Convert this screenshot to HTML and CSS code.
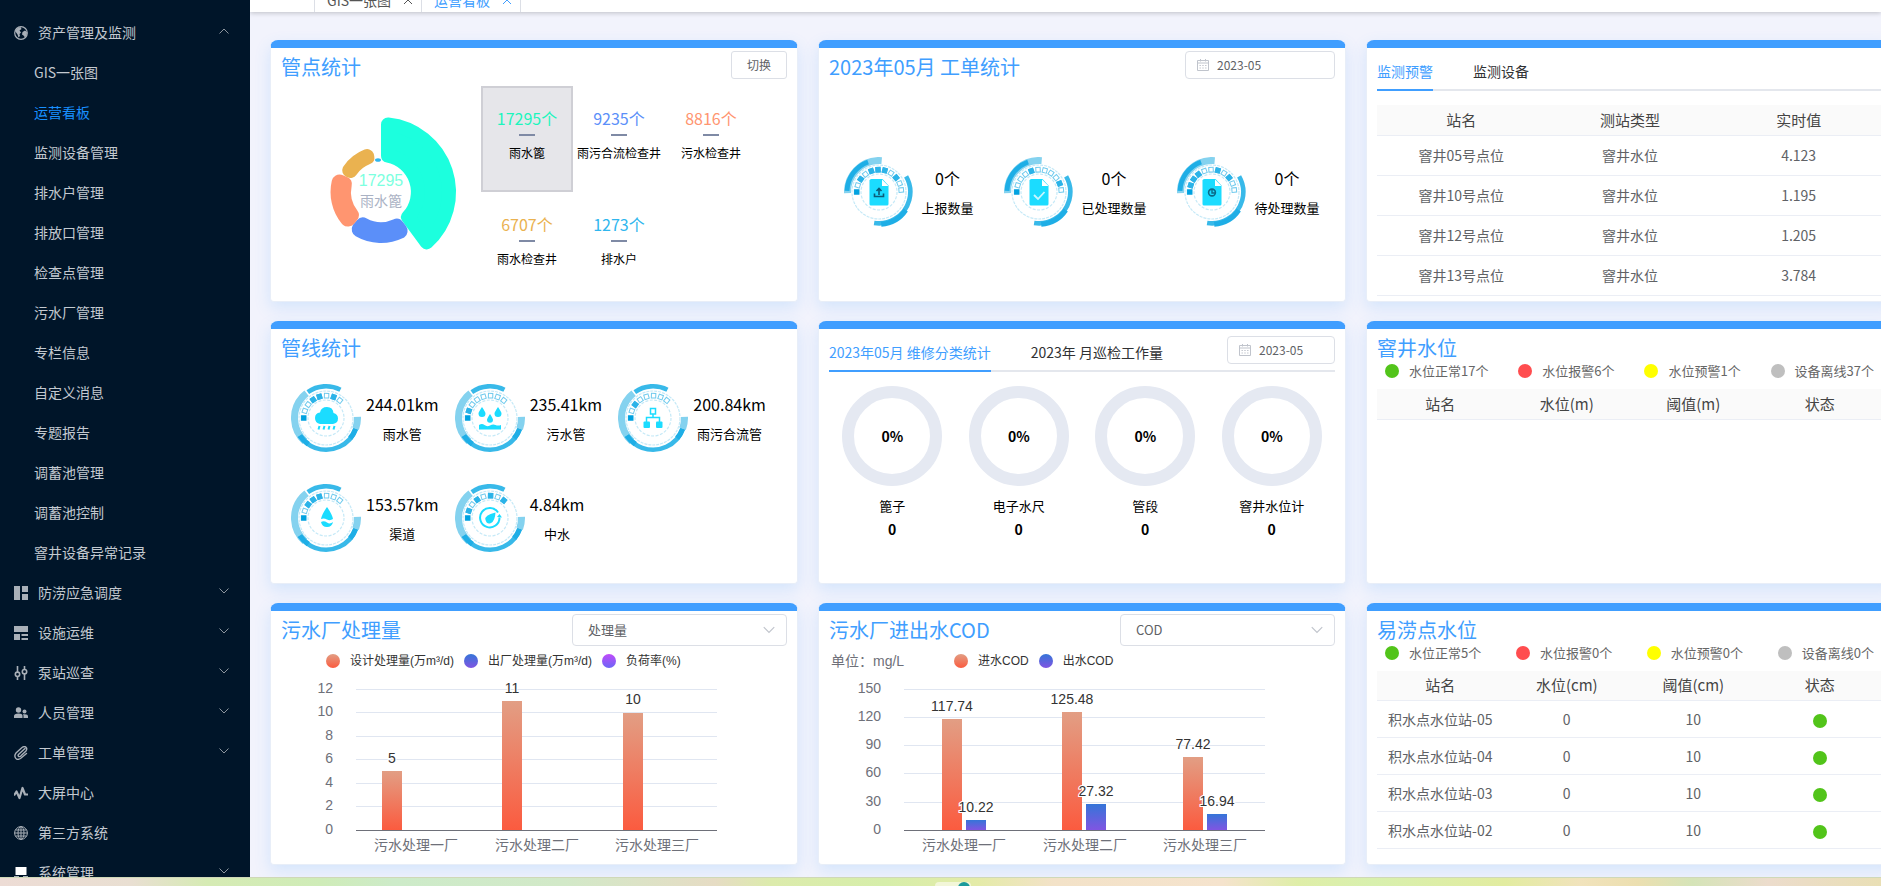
FILE: index.html
```html
<!DOCTYPE html>
<html lang="zh-CN">
<head>
<meta charset="utf-8">
<meta name="viewport" content="width=device-width, initial-scale=1">
<title>运营看板</title>
<link rel="stylesheet" href="styles.css">
</head>
<body>
<svg class="defs" aria-hidden="true">
  <defs>
    <linearGradient id="g-orange" x1="0" y1="0" x2="0" y2="1"><stop offset="0" stop-color="#e29e84"/><stop offset="1" stop-color="#fb5b3f"/></linearGradient>
    <linearGradient id="g-blue" x1="0" y1="0" x2="0" y2="1"><stop offset="0" stop-color="#3575d8"/><stop offset="1" stop-color="#8055e2"/></linearGradient>
    <rect id="box" x="-2.200" y="-24.600" width="4.400" height="4.600"/>
  </defs>
  <symbol id="i-up" viewBox="0 0 12 12"><path d="M1.500 8.500 6 4l4.500 4.500" fill="none" stroke="currentColor"/></symbol>
  <symbol id="i-down" viewBox="0 0 12 12"><path d="M1.500 3.500 6 8l4.500-4.500" fill="none" stroke="currentColor"/></symbol>
  <symbol id="i-close" viewBox="0 0 10 10"><path d="M1 1l8 8M9 1 1 9" fill="none" stroke="currentColor"/></symbol>
  <symbol id="i-cal" viewBox="0 0 12 12"><path d="M.5 1.500h11v10H.5zM.5 4h11M3.500 0v2.500M8.500 0v2.500" fill="none" stroke="currentColor"/><path d="M2.500 6.500h7M2.500 9h7" fill="none" stroke="currentColor" stroke-dasharray="1.400 1.400"/></symbol>
  <symbol id="ring-a" viewBox="-35 -35 70 70">
    <g fill="none">
      <circle r="31.500" stroke="#84d2ef" stroke-width="7" pathLength="360" stroke-dasharray="97 360" transform="rotate(178)"/>
      <circle r="32" stroke="#1eaee6" stroke-width="4.800" pathLength="360" stroke-dasharray="68 360" transform="rotate(182)"/>
      <circle r="31.300" stroke="#38b9e9" stroke-width="4.600" pathLength="360" stroke-dasharray="129 360" transform="rotate(-30)"/>
      <circle r="32.300" stroke="#1eaee6" stroke-width="5" pathLength="360" stroke-dasharray="52 360" transform="rotate(34)"/>
      <circle r="27" stroke="#c5e9f7" stroke-width="1.200" stroke-dasharray="3 1"/>
      <circle r="18" stroke="#c5e9f7" stroke-width="1.200" stroke-dasharray="3 1.500"/>
    </g>
    <g fill="#fff" stroke="#6fcaed">
      <use href="#box" transform="rotate(-72.500)"/><use href="#box" transform="rotate(-55)"/><use href="#box" transform="rotate(-37.500)"/><use href="#box" transform="rotate(-20)"/><use href="#box" transform="rotate(-2.500)"/><use href="#box" transform="rotate(15)"/><use href="#box" transform="rotate(32.500)"/><use href="#box" transform="rotate(50)"/><use href="#box" transform="rotate(67.500)"/><use href="#box" transform="rotate(85)"/>
    </g>
    <use href="#box" transform="rotate(-90)" fill="#00a2e0" stroke="#00a2e0"/>
  </symbol>
  <symbol id="ring-b" viewBox="-35 -35 70 70">
    <g fill="none">
      <circle r="31.700" stroke="#38b9e9" stroke-width="4.600" pathLength="360" stroke-dasharray="62 360" transform="rotate(-125)"/>
      <circle r="31.500" stroke="#84d2ef" stroke-width="7" pathLength="360" stroke-dasharray="100 360" transform="rotate(132)"/>
      <circle r="31.500" stroke="#84d2ef" stroke-width="7" pathLength="360" stroke-dasharray="22 360" transform="rotate(-2)"/>
      <circle r="31.700" stroke="#38b9e9" stroke-width="4.600" pathLength="360" stroke-dasharray="126 360" transform="rotate(20)"/>
      <circle r="31.500" stroke="#1eaee6" stroke-width="5.200" pathLength="360" stroke-dasharray="20 360" transform="rotate(20)"/>
      <circle r="31.500" stroke="#1eaee6" stroke-width="5.200" pathLength="360" stroke-dasharray="22 360" transform="rotate(124)"/>
      <circle r="27" stroke="#c5e9f7" stroke-width="1.200" stroke-dasharray="3 1"/>
      <circle r="18" stroke="#c5e9f7" stroke-width="1.200" stroke-dasharray="3 1.500"/>
    </g>
    <g fill="#fff" stroke="#6fcaed">
      <use href="#box" transform="rotate(-71.500)"/><use href="#box" transform="rotate(-53)"/><use href="#box" transform="rotate(-35)"/><use href="#box" transform="rotate(-17)"/><use href="#box" transform="rotate(1.500)"/><use href="#box" transform="rotate(20)"/><use href="#box" transform="rotate(38)"/>
    </g>
    <use href="#box" transform="rotate(-90)" fill="#00a2e0" stroke="#00a2e0"/>
  </symbol>
  <symbol id="file" viewBox="-35 -35 70 70"><path d="M-7.500-13H3.500L9.500-6.500V12Q9.500 13.500 8 13.500H-8Q-9.500 13.500-9.500 12V-11.500Q-9.500-13-7.500-13Z" fill="#1bdcff"/><path d="M3-12.500V-6H9.500Z" fill="#fff"/></symbol>
</svg>

<div class="app">
  <nav class="sidebar" aria-label="主菜单">
    <button class="menu" aria-expanded="true">
      <svg class="mi" viewBox="0 0 14 14"><circle cx="7" cy="7" r="6.300" fill="none" stroke="currentColor" stroke-width="1.200"/><path d="M1 5Q3 1.500 6.500 1L7.500 3 5.500 4.500 7 6.500 5.500 8 6 10 4.500 11.500 3.500 8.500ZM8.500 6 11 4.500 13 6Q13.500 9 11 11.500L9.500 9.500 8 8.500Z" fill="currentColor"/></svg>
      <span>资产管理及监测</span><svg class="arr"><use href="#i-up"/></svg></button>
    <a class="sub" href="#">GIS一张图</a>
    <a class="sub on" href="#" aria-current="page">运营看板</a>
    <a class="sub" href="#">监测设备管理</a>
    <a class="sub" href="#">排水户管理</a>
    <a class="sub" href="#">排放口管理</a>
    <a class="sub" href="#">检查点管理</a>
    <a class="sub" href="#">污水厂管理</a>
    <a class="sub" href="#">专栏信息</a>
    <a class="sub" href="#">自定义消息</a>
    <a class="sub" href="#">专题报告</a>
    <a class="sub" href="#">调蓄池管理</a>
    <a class="sub" href="#">调蓄池控制</a>
    <a class="sub" href="#">窨井设备异常记录</a>
    <button class="menu"><svg class="mi" viewBox="0 0 14 14"><path d="M0 0h6v14H0zM8 0h6v6H8zM8 8h6v6H8z" fill="currentColor"/></svg><span>防涝应急调度</span><svg class="arr"><use href="#i-down"/></svg></button>
    <button class="menu"><svg class="mi" viewBox="0 0 14 14"><path d="M0 0h14v6H0zM0 8h6v6H0zM7.500 8H14v2H7.500zM7.500 12H14v2H7.500z" fill="currentColor"/></svg><span>设施运维</span><svg class="arr"><use href="#i-down"/></svg></button>
    <button class="menu"><svg class="mi" viewBox="0 0 14 14"><g fill="none" stroke="currentColor" stroke-width="1.600"><path d="M3.500 0v6M3.500 10.500V14M10.500 0v3.500M10.500 8v6"/><circle cx="3.500" cy="8.300" r="2.200"/><circle cx="10.500" cy="5.700" r="2.200"/></g></svg><span>泵站巡查</span><svg class="arr"><use href="#i-down"/></svg></button>
    <button class="menu"><svg class="mi" viewBox="0 0 14 14"><g fill="currentColor"><circle cx="4.500" cy="4" r="2.700"/><path d="M0 12V10Q0 7.500 4.500 7.500T8.500 10V12Z"/><circle cx="10.500" cy="5.500" r="2"/><path d="M9.500 12V10Q9.500 9 8.800 8.300 14 7.500 14 10.500V12Z"/></g></svg><span>人员管理</span><svg class="arr"><use href="#i-down"/></svg></button>
    <button class="menu"><svg class="mi" viewBox="0 0 14 14"><path d="M11 2.500 4.500 8.500Q3.500 10 4.800 10.500T7 9.800L12 5Q13.500 2.500 12 1.200T8 1.500L2 7Q0 9.500 1.500 12T6.500 12.500L12.500 7.500" fill="none" stroke="currentColor" stroke-width="1.400" stroke-linecap="round"/></svg><span>工单管理</span><svg class="arr"><use href="#i-down"/></svg></button>
    <button class="menu"><svg class="mi" viewBox="0 0 14 14"><path d="M0 9.500 2.500 5.500 5.500 12 8.500 2 11 8.500H14" fill="none" stroke="currentColor" stroke-width="2.200" stroke-linejoin="round"/></svg><span>大屏中心</span></button>
    <button class="menu"><svg class="mi" viewBox="0 0 14 14"><g fill="none" stroke="currentColor"><circle cx="7" cy="7" r="6.400"/><ellipse cx="7" cy="7" rx="3" ry="6.400"/><path d="M.6 7h12.800M1.500 4h11M1.500 10h11M7 .6v12.800"/></g></svg><span>第三方系统</span></button>
    <button class="menu"><svg class="mi" viewBox="0 0 14 14"><path d="M1.500 1h11v8h-11z" fill="#fff"/><path d="M0 10h5v2H0zM9 10h5v2H9z" fill="currentColor"/></svg><span>系统管理</span><svg class="arr"><use href="#i-down"/></svg></button>
  </nav>

  <main class="main">
    <div class="pages">
      <a class="page" href="#">GIS一张图<svg class="x"><use href="#i-close"/></svg></a>
      <a class="page on" href="#">运营看板<svg class="x"><use href="#i-close"/></svg></a>
    </div>

    <div class="board">
      <section class="card">
        <header class="head"><h2>管点统计</h2><button class="btn">切换</button></header>
        <div class="points">
          <svg class="rose" viewBox="-100 -106 200 212" role="img" aria-label="管点数量占比">
            <g stroke-linejoin="round">
              <path d="M7-67.600A68 68 0 0 1 45.700 50.400L27.100 25.100A37 37 0 0 0 7-36.300Z" fill="#1cffde" stroke="#1cffde" stroke-width="14"/>
              <path d="M18.600 38.800A43 43 0 0 1-21.300 37.300L-18 33.500A38 38 0 0 0 15.500 34.700Z" fill="#5b8ff9" stroke="#5b8ff9" stroke-width="16"/>
              <path d="M-33.100 26.600A42.500 42.500 0 0 1-41.400-9.500L-37.200-7.600A38 38 0 0 0-30.200 23.100Z" fill="#ff9570" stroke="#ff9570" stroke-width="16"/>
              <path d="M-31.800-21.600A38.500 38.500 0 0 1-13.900-35.900L-13.600-34.400A37 37 0 0 0-30.500-21Z" fill="#eab250" stroke="#eab250" stroke-width="14"/>
            </g>
            <ellipse cx="-3" cy="-32" rx="3" ry="1.800" fill="#2fb6ee"/>
            <text class="rose-n" x="0" y="-6">17295</text>
            <text class="rose-t" x="0" y="14">雨水篦</text>
          </svg>
          <div class="cells">
            <div class="cell sel"><b class="c1">17295个</b><i></i><span>雨水篦</span></div>
            <div class="cell"><b class="c2">9235个</b><i></i><span>雨污合流检查井</span></div>
            <div class="cell"><b class="c3">8816个</b><i></i><span>污水检查井</span></div>
            <div class="cell"><b class="c4">6707个</b><i></i><span>雨水检查井</span></div>
            <div class="cell"><b class="c5">1273个</b><i></i><span>排水户</span></div>
          </div>
        </div>
      </section>

      <section class="card">
        <header class="head"><h2>2023年05月 工单统计</h2>
          <label class="date wide"><svg><use href="#i-cal"/></svg><input type="text" value="2023-05" aria-label="月份"></label></header>
        <div class="orders">
          <div class="stat gap"><svg class="ring" viewBox="-35 -35 70 70"><use href="#ring-a" x="-35" y="-35" width="70" height="70"/>
            <g fill="#2bb3e8" stroke="#2bb3e8"><use href="#box" transform="rotate(-55)"/><use href="#box" transform="rotate(-20)"/><use href="#box" transform="rotate(-2.500)"/><use href="#box" transform="rotate(15)"/><use href="#box" transform="rotate(50)"/></g>
            <use href="#file" x="-35" y="-35" width="70" height="70"/><path d="M0 3V-3M-2.500-1 0-3.500 2.500-1M-4.500 1.500V4.500H4.500V1.500" fill="none" stroke="#0b5c78" stroke-width="1.600"/></svg>
            <div><b>0个</b><span>上报数量</span></div></div>
          <div class="stat gap"><svg class="ring" viewBox="-35 -35 70 70"><use href="#ring-a" x="-35" y="-35" width="70" height="70"/>
            <g fill="#2bb3e8" stroke="#2bb3e8"><use href="#box" transform="rotate(-20)"/><use href="#box" transform="rotate(67.500)"/></g>
            <use href="#file" x="-35" y="-35" width="70" height="70"/><path d="M-5 3-1 7 5.500 0" fill="none" stroke="#c9f6ff" stroke-width="1.800"/></svg>
            <div><b>0个</b><span>已处理数量</span></div></div>
          <div class="stat gap"><svg class="ring" viewBox="-35 -35 70 70"><use href="#ring-a" x="-35" y="-35" width="70" height="70"/>
            <g fill="#2bb3e8" stroke="#2bb3e8"><use href="#box" transform="rotate(-72.500)"/><use href="#box" transform="rotate(-55)"/><use href="#box" transform="rotate(-37.500)"/><use href="#box" transform="rotate(15)"/><use href="#box" transform="rotate(50)"/></g>
            <use href="#file" x="-35" y="-35" width="70" height="70"/><circle r="3.400" cy=".5" fill="none" stroke="#0b6a88" stroke-width="1.600"/><path d="M0-2V1H3" fill="none" stroke="#0b6a88" stroke-width="1.400"/></svg>
            <div><b>0个</b><span>待处理数量</span></div></div>
        </div>
      </section>

      <section class="card">
        <div class="tabs" role="tablist"><button class="tab on" role="tab" aria-selected="true">监测预警</button><button class="tab" role="tab">监测设备</button></div>
        <table class="grid tall">
          <thead><tr><th>站名</th><th>测站类型</th><th>实时值</th></tr></thead>
          <tbody>
            <tr><td>窨井05号点位</td><td>窨井水位</td><td>4.123</td></tr>
            <tr><td>窨井10号点位</td><td>窨井水位</td><td>1.195</td></tr>
            <tr><td>窨井12号点位</td><td>窨井水位</td><td>1.205</td></tr>
            <tr><td>窨井13号点位</td><td>窨井水位</td><td>3.784</td></tr>
          </tbody>
        </table>
      </section>

      <section class="card">
        <header class="head"><h2>管线统计</h2></header>
        <div class="pipes">
          <div class="stat"><svg class="ring" viewBox="-35 -35 70 70"><use href="#ring-b" x="-35" y="-35" width="70" height="70"/>
            <g fill="#2bb3e8" stroke="#2bb3e8"><use href="#box" transform="rotate(-35)"/><use href="#box" transform="rotate(-17)"/><use href="#box" transform="rotate(20)"/></g>
            <path d="M-6 6Q-11 5-11 0T-6-5.500Q-5-11 1-11T7.500-5Q12-4 12 .5T7 6Z" fill="#1bdcff"/><path d="M-6.500 8-7.500 11.500M-1.500 8-2.500 11.500M3.500 8 2.500 11.500M8.500 8 7.500 11.500" stroke="#1bdcff" stroke-width="2"/></svg>
            <div><b>244.01km</b><span>雨水管</span></div></div>
          <div class="stat"><svg class="ring" viewBox="-35 -35 70 70"><use href="#ring-b" x="-35" y="-35" width="70" height="70"/>
            <g fill="#2bb3e8" stroke="#2bb3e8"><use href="#box" transform="rotate(-71.500)"/></g>
            <path d="M-8-11Q-4.500-6-4.500-4.500A3.500 3.500 0 0 1-11.500-4.500Q-11.500-6-8-11ZM8-11Q11.500-6 11.500-4.500A3.500 3.500 0 0 1 4.500-4.500Q4.500-6 8-11ZM0-4Q3 .5 3 1.800A3 3 0 0 1-3 1.800Q-3 .5 0-4ZM-11 7Q-8 5-5.500 7T0 7.500 5.500 7 11 7V11.500H-11Z" fill="#1bdcff"/></svg>
            <div><b>235.41km</b><span>污水管</span></div></div>
          <div class="stat"><svg class="ring" viewBox="-35 -35 70 70"><use href="#ring-b" x="-35" y="-35" width="70" height="70"/>
            <g fill="#2bb3e8" stroke="#2bb3e8"><use href="#box" transform="rotate(-53)"/></g>
            <path d="M-2.500-9.500h5v5.500h-5zM0-4V0M-6.500 4V-.5H6.500V4" fill="none" stroke="#1bdcff" stroke-width="1.500"/><rect x="-9.500" y="3.500" width="6.500" height="6.500" rx="1" fill="#1bdcff"/><rect x="3" y="3.500" width="6.500" height="6.500" rx="1" fill="#1bdcff"/></svg>
            <div><b>200.84km</b><span>雨污合流管</span></div></div>
          <div class="stat"><svg class="ring" viewBox="-35 -35 70 70"><use href="#ring-b" x="-35" y="-35" width="70" height="70"/>
            <g fill="#2bb3e8" stroke="#2bb3e8"><use href="#box" transform="rotate(-53)"/><use href="#box" transform="rotate(-35)"/><use href="#box" transform="rotate(-17)"/></g>
            <path d="M1-11Q6-4 7 1Q4 3 1 1.500T-5 1Q-4-4 1-11ZM-5 4Q-2 2.500 1 4.500T7 4Q6 9 1 9T-5 4Z" fill="#1bdcff"/></svg>
            <div><b>153.57km</b><span>渠道</span></div></div>
          <div class="stat"><svg class="ring" viewBox="-35 -35 70 70"><use href="#ring-b" x="-35" y="-35" width="70" height="70"/>
            <g fill="#2bb3e8" stroke="#2bb3e8"><use href="#box" transform="rotate(-71.500)"/><use href="#box" transform="rotate(-35)"/><use href="#box" transform="rotate(1.500)"/><use href="#box" transform="rotate(38)"/></g>
            <path d="M8-5.500A9.700 9.700 0 1 0 9.500-.5" fill="none" stroke="#1bdcff" stroke-width="2"/><path d="M7-1 9.500-4 12-.5ZM5.500-5.500Q5 3 1 5T-4.500 2 5.500-5.500Z" fill="#1bdcff"/></svg>
            <div><b>4.84km</b><span>中水</span></div></div>
        </div>
      </section>

      <section class="card">
        <div class="tabs" role="tablist"><button class="tab on" role="tab" aria-selected="true">2023年05月 维修分类统计</button><button class="tab" role="tab">2023年 月巡检工作量</button>
          <label class="date"><svg><use href="#i-cal"/></svg><input type="text" value="2023-05" aria-label="统计月份"></label></div>
        <div class="gauges">
          <div class="gauge"><div class="circle">0%</div><span>篦子</span><b>0</b></div>
          <div class="gauge"><div class="circle">0%</div><span>电子水尺</span><b>0</b></div>
          <div class="gauge"><div class="circle">0%</div><span>管段</span><b>0</b></div>
          <div class="gauge"><div class="circle">0%</div><span>窨井水位计</span><b>0</b></div>
        </div>
      </section>

      <section class="card">
        <header class="head"><h2>窨井水位</h2></header>
        <ul class="levels"><li><i class="dot ok"></i>水位正常17个</li><li><i class="dot alarm"></i>水位报警6个</li><li><i class="dot warn"></i>水位预警1个</li><li><i class="dot off"></i>设备离线37个</li></ul>
        <table class="grid"><thead><tr><th>站名</th><th>水位(m)</th><th>阈值(m)</th><th>状态</th></tr></thead></table>
      </section>

      <section class="card">
        <header class="head"><h2>污水厂处理量</h2>
          <div class="select"><select aria-label="指标"><option>处理量</option></select><svg><use href="#i-down"/></svg></div></header>
        <div class="legend first"><span><i class="dot s1"></i>设计处理量(万m³/d)</span><span><i class="dot s2"></i>出厂处理量(万m³/d)</span><span><i class="dot s3"></i>负荷率(%)</span></div>
        <svg class="chart" viewBox="0 0 506 180" role="img" aria-label="污水厂处理量">
          <path class="lines" d="M75 13.500H436M75 36.500H436M75 60.500H436M75 83.500H436M75 107.500H436M75 130.500H436"/>
          <g class="ax end"><text x="52" y="17">12</text><text x="52" y="40">10</text><text x="52" y="64">8</text><text x="52" y="87">6</text><text x="52" y="111">4</text><text x="52" y="134">2</text><text x="52" y="158">0</text></g>
          <g fill="url(#g-orange)"><rect x="101" y="95" width="20" height="59"/><rect x="221" y="25" width="20" height="129"/><rect x="342" y="37" width="20" height="117"/></g>
          <path class="base" d="M75 154.500H436"/>
          <g class="val"><text x="111" y="87">5</text><text x="231" y="17">11</text><text x="352" y="28">10</text></g>
          <g class="ax"><text x="135" y="174">污水处理一厂</text><text x="256" y="174">污水处理二厂</text><text x="376" y="174">污水处理三厂</text></g>
        </svg>
      </section>

      <section class="card">
        <header class="head"><h2>污水厂进出水COD</h2>
          <div class="select"><select aria-label="水质指标"><option>COD</option></select><svg><use href="#i-down"/></svg></div></header>
        <div class="legend"><em>单位：mg/L</em><span><i class="dot s1"></i>进水COD</span><span><i class="dot s2"></i>出水COD</span></div>
        <svg class="chart" viewBox="0 0 506 180" role="img" aria-label="污水厂进出水COD">
          <path class="lines" d="M75 13.500H436M75 41.500H436M75 69.500H436M75 97.500H436M75 126.500H436"/>
          <g class="ax end"><text x="52" y="17">150</text><text x="52" y="45">120</text><text x="52" y="73">90</text><text x="52" y="101">60</text><text x="52" y="130">30</text><text x="52" y="158">0</text></g>
          <g fill="url(#g-orange)"><rect x="113" y="43" width="20" height="111"/><rect x="233" y="36" width="20" height="118"/><rect x="354" y="81" width="20" height="73"/></g>
          <g fill="url(#g-blue)"><rect x="137" y="144" width="20" height="10"/><rect x="257" y="128" width="20" height="26"/><rect x="378" y="138" width="20" height="16"/></g>
          <path class="base" d="M75 154.500H436"/>
          <g class="val"><text x="123" y="35">117.74</text><text x="243" y="28">125.48</text><text x="364" y="73">77.42</text><text x="147" y="136">10.22</text><text x="267" y="120">27.32</text><text x="388" y="130">16.94</text></g>
          <g class="ax"><text x="135" y="174">污水处理一厂</text><text x="256" y="174">污水处理二厂</text><text x="376" y="174">污水处理三厂</text></g>
        </svg>
      </section>

      <section class="card">
        <header class="head"><h2>易涝点水位</h2></header>
        <ul class="levels"><li><i class="dot ok"></i>水位正常5个</li><li><i class="dot alarm"></i>水位报警0个</li><li><i class="dot warn"></i>水位预警0个</li><li><i class="dot off"></i>设备离线0个</li></ul>
        <table class="grid">
          <thead><tr><th>站名</th><th>水位(cm)</th><th>阈值(cm)</th><th>状态</th></tr></thead>
          <tbody>
            <tr><td>积水点水位站-05</td><td>0</td><td>10</td><td><i class="dot ok"></i></td></tr>
            <tr><td>积水点水位站-04</td><td>0</td><td>10</td><td><i class="dot ok"></i></td></tr>
            <tr><td>积水点水位站-03</td><td>0</td><td>10</td><td><i class="dot ok"></i></td></tr>
            <tr><td>积水点水位站-02</td><td>0</td><td>10</td><td><i class="dot ok"></i></td></tr>
          </tbody>
        </table>
      </section>
    </div>
  </main>
</div>
<footer class="taskbar"><div class="task"><i></i></div></footer>
</body>
</html>
```

FILE: styles.css
```css
* { box-sizing: border-box; }
html, body { height: 100%; }
body {
  margin: 0;
  display: flex;
  flex-direction: column;
  overflow: hidden;
  font: 14px/20px "Noto Sans CJK SC", "Noto Sans", sans-serif;
  color: #000;
}
button, input, select { font: inherit; color: inherit; margin: 0; }
a { color: inherit; text-decoration: none; }
h2, ul { margin: 0; padding: 0; font-weight: 400; }
b, i, em { font-weight: 400; font-style: normal; }
.defs { position: absolute; width: 0; height: 0; }

.app { flex: 1; min-height: 0; display: flex; overflow: hidden; }

/* sidebar */
.sidebar {
  flex: 0 0 250px;
  padding-top: 13px;
  display: flex;
  flex-direction: column;
  overflow: hidden;
  background: #001529;
  color: #c3c9d0;
}
.menu, .sub { flex: 0 0 40px; display: flex; align-items: center; }
.menu {
  gap: 10px;
  padding: 0 20px 0 14px;
  border: 0;
  background: none;
  text-align: left;
}
.menu span { flex: 1; padding-bottom: 2px; }
.mi { width: 14px; height: 14px; color: #a9b0b8; }
.arr { width: 12px; height: 12px; margin-bottom: 4px; color: #8d959e; }
.sub { padding: 0 34px 2px; }
.sub.on { color: #1890ff; }

/* open pages */
.main {
  flex: 1;
  min-width: 0;
  display: flex;
  flex-direction: column;
  overflow: hidden;
  background: #f2f3fc;
}
.pages {
  flex: 0 0 12px;
  min-height: 0;
  display: flex;
  align-items: flex-end;
  padding-left: 64px;
  overflow: hidden;
  background: #fff;
  box-shadow: 0 1px 5px rgba(0, 0, 0, .22);
}
.page {
  display: flex;
  align-items: center;
  gap: 12px;
  height: 24px;
  padding: 0 8px 0 12px;
  border: solid #dcdfe6;
  border-width: 0 1px;
  color: #555;
}
.page + .page { border-left: 0; }
.page.on { color: #409eff; }
.x { width: 10px; height: 10px; }

/* cards */
.board {
  flex: 1;
  min-height: 0;
  min-width: 1664px;
  padding: 28px 20px 12px;
  display: grid;
  grid-template-columns: repeat(3, minmax(0, 1fr));
  grid-template-rows: repeat(3, minmax(0, 1fr));
  column-gap: 20px;
  row-gap: 19px;
}
.card {
  display: flex;
  flex-direction: column;
  min-height: 0;
  padding: 3px 10px 0;
  background: #fff;
  border: 1px solid #e8eef8;
  border-top: 8px solid #409eff;
  border-radius: 8px 8px 4px 4px;
  box-shadow: 0 6px 16px rgba(64, 158, 255, .17);
}
.head { display: flex; justify-content: space-between; align-items: flex-start; flex: 0 0 32px; }
.head h2 { font-size: 20px; line-height: 32px; color: #409eff; }
.btn {
  width: 56px;
  height: 28px;
  padding: 0;
  border: 1px solid #dcdfe6;
  border-radius: 3px;
  background: #fff;
  color: #606266;
  font-size: 12px;
}
.date {
  display: flex;
  align-items: center;
  gap: 8px;
  width: 108px;
  height: 28px;
  padding: 0 11px;
  border: 1px solid #dcdfe6;
  border-radius: 4px;
  background: #fff;
  color: #606266;
  font-size: 12px;
}
.date.wide { width: 150px; }
.date svg { flex: none; width: 12px; height: 12px; color: #c0c4cc; }
.date input { flex: 1; min-width: 0; padding: 0; border: 0; outline: 0; background: none; }
.select {
  display: flex;
  align-items: center;
  width: 215px;
  height: 32px;
  padding: 0 10px 0 15px;
  border: 1px solid #dcdfe6;
  border-radius: 4px;
  background: #fff;
  color: #606266;
  font-size: 13px;
}
.select select { flex: 1; padding: 0; border: 0; outline: 0; appearance: none; background: none; }
.select svg { width: 14px; height: 14px; color: #c0c4cc; }

/* inspection points */
.points { display: flex; margin-top: 3px; }
.rose { flex: 0 0 200px; height: 212px; }
.rose text { text-anchor: middle; }
.rose-n { font: 16px "Liberation Sans", sans-serif; fill: #7dffe0; }
.rose-t { font-size: 14px; fill: #aab2c4; }
.cells { display: grid; grid-template-columns: repeat(3, 92px); grid-auto-rows: 106px; }
.cell {
  display: flex;
  flex-direction: column;
  align-items: center;
  padding-top: 18px;
  border: 2px solid transparent;
  white-space: nowrap;
}
.cell.sel { background: #e6e6ea; border-color: #cfcfd5; }
.cell b { font-size: 16px; line-height: 24px; }
.cell i { width: 16px; height: 2px; margin: 4px 0 7px; background: #7f8aa5; }
.cell span { font-size: 12px; }
.c1 { color: #1df5bd; }
.c2 { color: #5b8ff9; }
.c3 { color: #ff9570; }
.c4 { color: #eab250; }
.c5 { color: #2fb6ee; }

/* ring statistics */
.orders { flex: 1; display: flex; justify-content: space-around; align-items: center; }
.pipes {
  display: grid;
  grid-template-columns: repeat(3, 1fr);
  grid-auto-rows: 100px;
  align-items: center;
  margin-top: 4px;
  padding: 0 5px 0 10px;
}
.stat { display: flex; align-items: center; gap: 5px; }
.stat.gap { gap: 7px; }
.ring { flex: none; width: 70px; height: 70px; }
.stat div { display: flex; flex-direction: column; align-items: center; padding-top: 2px; }
.stat b { font-size: 16px; line-height: 29px; }
.stat span { font-size: 13px; line-height: 29px; }

/* tabs */
.tabs {
  flex: 0 0 40px;
  display: flex;
  gap: 40px;
  margin-bottom: 14px;
  box-shadow: inset 0 -2px #e4e7ed;
}
.tab { padding: 0; border: 0; background: none; line-height: 40px; color: #303133; white-space: nowrap; }
.tab.on { color: #409eff; box-shadow: inset 0 -2px #409eff; }
.tabs .date { margin: 4px 0 0 auto; }

.gauges { display: grid; grid-template-columns: repeat(4, 1fr); }
.gauge { display: flex; flex-direction: column; align-items: center; }
.circle {
  display: grid;
  place-items: center;
  width: 100px;
  height: 100px;
  border: 12px solid #e5e9f2;
  border-radius: 50%;
  font-weight: 700;
}
.gauge span { margin-top: 10px; font-size: 13px; }
.gauge b { font-weight: 700; line-height: 26px; }

/* tables */
.grid { width: 100%; table-layout: fixed; border-collapse: collapse; text-align: center; }
.grid th, .grid td { padding: 0; border-bottom: 1px solid #ebeef5; }
.grid th { height: 30px; background: #fafafa; font-size: 15px; font-weight: 400; color: #444; }
.grid td { height: 37px; color: #606266; }
.grid.tall td { height: 40px; }
.grid .dot { vertical-align: middle; }

.dot { display: inline-block; width: 14px; height: 14px; border-radius: 50%; }
.ok { background: #52c41a; }
.alarm { background: #ff4d4f; }
.warn { background: #ff0; }
.off { background: #bfbfbf; }
.s1 { background: linear-gradient(#e29e84, #fb5b3f); }
.s2 { background: linear-gradient(#3575d8, #8055e2); }
.s3 { background: linear-gradient(#c04bfa, #6b66f6); }

.levels {
  display: flex;
  justify-content: space-between;
  margin-bottom: 11px;
  padding: 0 9px 0 8px;
  list-style: none;
  font-size: 13px;
  line-height: 14px;
  color: #666;
}
.levels li { display: flex; align-items: center; gap: 10px; }

/* bar charts */
.legend {
  flex: 0 0 30px;
  display: flex;
  align-items: center;
  gap: 10px;
  font-family: "Liberation Sans", "Noto Sans CJK SC", sans-serif;
  font-size: 12px;
  color: #333;
}
.legend.first { padding-left: 45px; }
.legend span { display: flex; align-items: center; gap: 10px; white-space: nowrap; }
.legend em { flex: 0 0 115px; padding-left: 2px; font-size: 14px; color: #6e7079; }
.chart { width: 100%; height: 180px; }
.chart text { font: 14px "Liberation Sans", "Noto Sans CJK SC", sans-serif; text-anchor: middle; }
.chart .end text { text-anchor: end; }
.ax { fill: #6e7079; }
.val { fill: #333; stroke: #fff; stroke-width: 2px; paint-order: stroke; }
.lines { stroke: #e0e6f1; }
.base { stroke: #6e7079; }

/* desktop strip under the window */
.taskbar {
  flex: 0 0 9px;
  min-height: 0;
  padding-left: 935px;
  overflow: hidden;
  border-top: 1px solid #cfd8b8;
  background: linear-gradient(90deg, #eddcd5 0, #e9dfd2 7%, #d6ebb4 11%, #cfecb8 17%, #cdebc9 21%, #d2e9c8 30%, #e6dcc4 38%, #dcebac 41%, #d6eeaa 47%, #e4eba8 52%, #f3e2c8 56%, #f5e3cd 65%, #dfeea8 69%, #d8f0ae 73%, #e2eca0 80%, #f1e3bc 84%, #ecdfb0 87%, #d5e4b8 90%, #ecdccc 94%, #e9dfb5 100%);
}
.task { width: 36px; height: 20px; margin-top: 4px; padding-left: 23px; border-radius: 4px; background: #f2f6d8; }
.task i { display: block; width: 12px; height: 12px; border-radius: 50%; background: #1a9a9a; }
```
